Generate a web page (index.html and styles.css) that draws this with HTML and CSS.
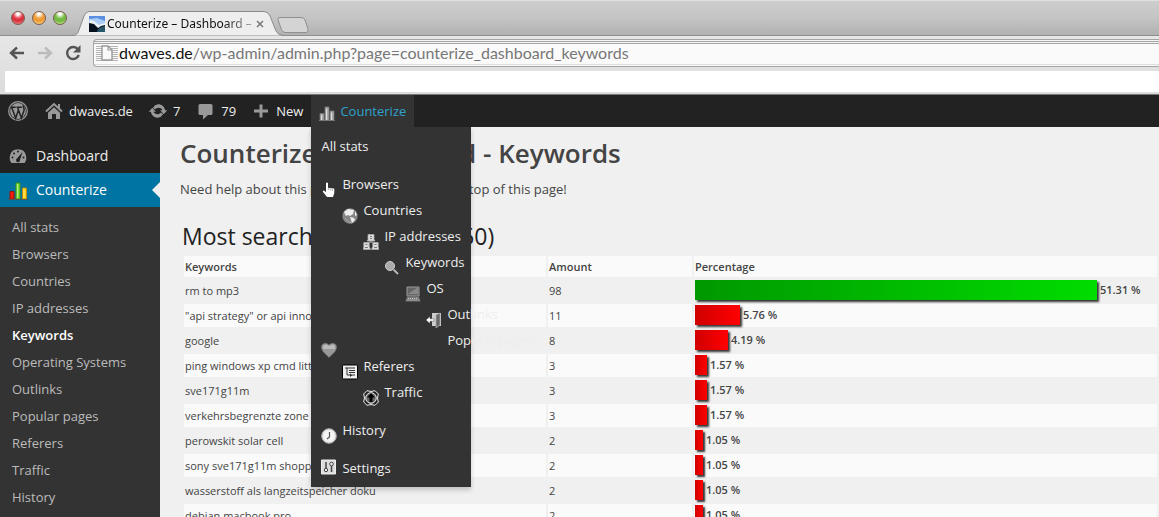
FILE: index.html
```html
<!DOCTYPE html>
<html lang="en">
<head>
<meta charset="utf-8">
<title>Counterize – Dashboard – Keywords</title>
<link rel="stylesheet" href="styles.css">
</head>
<body>
<header class="browser">
  <div class="tabstrip">
    <div class="lights">
      <button class="light light-red" aria-label="Close window"></button>
      <button class="light light-amber" aria-label="Minimise window"></button>
      <button class="light light-green" aria-label="Zoom window"></button>
    </div>
    <div class="tab">
      <svg class="tab-shape" viewBox="0 0 210 25" preserveAspectRatio="none"><path d="M0 24.500C4 24 5 22 6 19L11 5Q13 .5 16 .5H191Q195 .5 197 5L203 20Q205 24 210 24.500" fill="#eee" stroke="#8b8b8b"/></svg>
      <svg class="favicon" viewBox="0 0 16 16"><path fill="#5c8fe0" d="M0 0h16v16H0z"/><path fill="#a9cdf5" d="M0 3l8-1 8 3v5H0z"/><path fill="#eef5f7" d="M1 4l4 1 5 4 6-2v3L8 13 0 9z"/><path fill="#06121e" d="M0 7l5 1 4 4 3-2 4-1v7H0z"/><path fill="#28566b" d="M9 13l3-2 4-1v6H8z"/></svg>
      <span class="tab-title">Counterize – Dashboard –</span>
      <button class="tab-close" aria-label="Close tab"><svg viewBox="0 0 8 8"><path d="M1 1l6 6M7 1L1 7" stroke="#777" stroke-width="1.500"/></svg></button>
    </div>
    <button class="new-tab" aria-label="New tab"><svg viewBox="0 0 34 18"><path d="M4 1.500H25Q28 1.500 29 4L32 13Q33 16.500 30 16.500H9Q7 16.500 5.500 13.500L2 4Q1 1.500 4 1.500z" fill="#d4d4d4" stroke="#8f8f8f"/></svg></button>
  </div>
  <div class="toolbar">
    <button class="tool" aria-label="Back"><svg viewBox="0 0 16 16"><path d="M15 8H2M8 2.500L2 8l6 5.500" stroke="#555" stroke-width="2.400" fill="none"/></svg></button>
    <button class="tool" aria-label="Forward"><svg viewBox="0 0 16 16"><path d="M1 8h13M8 2.500L14 8l-6 5.500" stroke="#bbb" stroke-width="2.400" fill="none"/></svg></button>
    <button class="tool" aria-label="Reload"><svg viewBox="0 0 16 16"><path d="M13 4.500A6 6 0 1 0 13.800 10" stroke="#555" stroke-width="2.400" fill="none"/><path d="M15.500 0v7.500H8z" fill="#555"/></svg></button>
    <div class="omnibox">
      <span class="page-icon"><svg viewBox="0 0 12 16"><path d="M1 1h6l4 4v10H1z" fill="#fafafa" stroke="#9b9b9b" stroke-width="1.400"/><path d="M7 1v4h4" fill="none" stroke="#9b9b9b" stroke-width="1.200"/></svg></span>
      <label class="host" for="url">dwaves.de</label>
      <input class="url" id="url" type="text" value="/wp-admin/admin.php?page=counterize_dashboard_keywords">
    </div>
  </div>
  <div class="bookmarks"></div>
</header>

<nav class="adminbar" aria-label="Toolbar">
  <a class="bar-item" href="#" aria-label="WordPress"><svg class="bar-icon" viewBox="0 0 20 20"><circle cx="10" cy="10" r="9.300" fill="none" stroke="#999" stroke-width="1.300"/><circle cx="10" cy="10" r="7.900" fill="#999"/><path d="M2.500 6.300h5.200M3.700 6.500L7.700 17L10.500 9M8.500 6.300h5.400M9.600 6.500L13.400 17l2.600-7.600c.8-2.500-1.300-3-.7-5" fill="none" stroke="#222" stroke-width="1.500"/></svg></a>
  <a class="bar-item bar-snug" href="#"><svg class="bar-icon" viewBox="0 0 20 20"><path d="M2 10.500L10 3l8 7.500M15 3v5" fill="none" stroke="#999" stroke-width="2"/><path d="M10 6.200l6 5.600V18h-4v-5H8v5H4v-6.200z" fill="#999"/></svg>dwaves.de</a>
  <a class="bar-item" href="#"><svg class="bar-icon" viewBox="0 0 20 20"><path d="M10.200 3.280c3.530 0 6.430 2.610 6.920 6h2.080l-3.500 4-3.500-4h2.320a4.440 4.440 0 0 0-3.970-2.450c-1.450 0-2.730.71-3.540 1.780L4.950 6.660a6.960 6.960 0 0 1 5.250-3.380zM9.800 16.720c-3.520 0-6.430-2.610-6.920-6H.8l3.500-4 3.500 4H5.480c.7 1.450 2.200 2.450 3.970 2.450 1.450 0 2.730-.71 3.540-1.780l2.060 1.950a6.950 6.950 0 0 1-5.250 3.380z" fill="#999"/></svg>7</a>
  <a class="bar-item bar-snug" href="#"><svg class="bar-icon" viewBox="0 0 20 20"><path d="M4 3h11q1.500 0 1.500 1.500v8Q16.500 14 15 14h-3l-5 4.500V14H4q-1.500 0-1.500-1.500v-8Q2.500 3 4 3z" fill="#999"/></svg>79</a>
  <a class="bar-item" href="#"><svg class="bar-icon" viewBox="0 0 20 20"><path d="M3 10h14M10 3.500v13" stroke="#999" stroke-width="3"/></svg>New</a>
  <div class="bar-menu">
    <a class="bar-item bar-open" href="#"><svg class="icon" viewBox="0 0 16 16"><path d="M1 8.500h4V16H1zM6 2h4v14H6zM11 6h4v10h-4z" fill="#aaa" stroke="#777" stroke-width=".8"/><path d="M2.500 10v5M7.500 4v11M12.500 8v7" stroke="#ddd"/><path d="M0 15.500h16" stroke="#777"/></svg>Counterize</a>
    <div class="dropdown">
      <div class="group"><a class="entry" href="#">All stats</a></div>
      <div class="group">
        <a class="entry" href="#"><svg class="icon" viewBox="0 0 16 16"><path d="M5 1.500Q5 .5 6 .5T7 1.500V6q1-.8 2 .2q1-.7 2 .3q1.500-.6 2.300.5V11l-1.300 4H6L2 10q-.8-1.500.8-1.500L5 10z" fill="#fff"/><path d="M7.300 6v2M9.300 6.500v2M11.300 7v2" stroke="#777" stroke-width=".6"/></svg>Browsers</a>
        <a class="entry step-1" href="#"><svg class="icon" viewBox="0 0 16 16"><circle cx="8" cy="8" r="7.700" fill="#858585"/><path d="M2 4l4-3 6 1-1 4-3 2-2-1-2 1zM8 9l4 1 1 2-3 3-1-3zM13 3l2 4-2 1z" fill="#eee"/><path d="M3 10q3 5 7 5" stroke="#aaa" fill="none"/></svg>Countries</a>
        <a class="entry step-2" href="#"><svg class="icon" viewBox="0 0 16 16"><path d="M8 6v3M3 11l3-3h4l3 3" stroke="#999" fill="none"/><g fill="#ddd" stroke="#aaa" stroke-width=".8"><path d="M5 .5h6v5l1 1.500H4l1-1.500zM.8 8.500h5.400v4l1.300 3H.3l.5-3zM9.800 8.500h5.400v4l.5 3H8.500l1.300-3z"/></g><path d="M7 2.500h2M7 4.500h2M2.500 10.500h2M11.500 10.500h2M2 13.500h3M11 13.500h3" stroke="#777"/></svg>IP addresses</a>
        <a class="entry step-3" href="#"><svg class="icon" viewBox="0 0 16 16"><circle cx="6" cy="6" r="4.500" fill="#aaa" stroke="#d0d0d0"/><path d="M9.500 9.500l4.500 4.500" stroke="#bbb" stroke-width="1.800"/></svg>Keywords</a>
        <a class="entry step-4" href="#"><svg class="icon" viewBox="0 0 16 16"><path d="M2 1h12v9H2z" fill="#666" stroke="#999"/><path d="M3 8l9-6h1v6z" fill="#888"/><path d="M2 10.500h12l1.700 5H.3z" fill="#777"/><path d="M3 12.500h10M2.500 14h11" stroke="#ccc" stroke-dasharray="1 1"/></svg>OS</a>
        <a class="entry step-5" href="#"><svg class="icon" viewBox="0 0 16 16"><path d="M6 1h9v13H6z" fill="#ccc"/><path d="M10 3l4-2v12l-4 3z" fill="#666" stroke="#aaa" stroke-width=".8"/><path d="M0 8l4-3.500v2.300h4v2.400H4v2.300z" fill="#fff" stroke="#555" stroke-width=".5"/></svg>Outlinks</a>
        <a class="entry entry-split" href="#"><svg class="icon" viewBox="0 0 16 16"><path d="M8 15.500L2 9.500Q-.5 6 1 3Q4-.5 8 3Q12-.5 15 3q1.500 3-1 6.500z" fill="#999" stroke="#777" stroke-width=".7"/><path d="M2 4q3-3 5.500 0H8.500Q12 1 14 4v3H2z" fill="#bbb"/></svg><span>Popular pages</span></a>
        <a class="entry step-1" href="#"><svg class="icon" viewBox="0 0 16 16"><rect x=".5" y="1" width="15" height="14" rx="1" fill="#eee" stroke="#000"/><path d="M3 4h10M5 4v7h3M7 6.500h6M7 8.500h6M9 11h4" stroke="#333" fill="none"/><path d="M8 9.500l2 1.700L8 13z" fill="#222"/></svg>Referers</a>
        <a class="entry step-2" href="#"><svg class="icon" viewBox="0 0 16 16"><path d="M4 .7L8 1.500l4-.8L15.300 4l-.8 4 .8 4-3.300 3.300-4-.8-4 .8L.7 12l.8-4-.8-4z" fill="#222" stroke="#eee"/><circle cx="8" cy="8" r="5.300" fill="#666" stroke="#eee"/><path d="M8 3L12 7.500H9.500V12h-3V7.500H4z" fill="#000"/></svg>Traffic</a>
      </div>
      <div class="group"><a class="entry" href="#"><svg class="icon" viewBox="0 0 16 16"><circle cx="8" cy="8" r="7.300" fill="#e8e8e8" stroke="#aaa"/><circle cx="8" cy="8" r="5.500" fill="#f5f5f5"/><path d="M8.500 4v5L6 11" stroke="#555" stroke-width="1.200" fill="none"/></svg>History</a></div>
      <div class="group"><a class="entry entry-level" href="#"><svg class="icon" viewBox="0 0 16 16"><path d="M.5 1h14v14H.5z" fill="#ddd" stroke="#eee"/><path d="M5 3v7M10.500 7v6" stroke="#444" stroke-width="1.500"/><circle cx="5" cy="11" r="1.700" fill="#eee" stroke="#444"/><circle cx="10.500" cy="5" r="1.800" fill="#eee" stroke="#444"/></svg>Settings</a></div>
    </div>
  </div>
</nav>

<div class="workspace">
  <nav class="sidebar" aria-label="Main menu">
    <a class="side-item" href="#"><svg class="side-icon" viewBox="0 0 20 20"><path d="M3.500 17Q1 14 2 9.500A8.200 8 0 0 1 18 9.500q1 4.500-1.500 7.500z" fill="#999"/><g fill="#222"><circle cx="4.500" cy="11.500" r="1"/><circle cx="6" cy="7.500" r="1"/><circle cx="10" cy="5.500" r="1"/><circle cx="15.500" cy="11.500" r="1"/><path d="M14.500 6L12 14a2 2 0 1 1-3-1.500z"/></g></svg>Dashboard</a>
    <a class="side-item side-current" href="#"><svg class="side-icon" viewBox="0 0 20 20"><path d="M2 11.500h4V19H2z" fill="#f21d0c" stroke="#9c1307"/><path d="M8 3h4v16H8z" fill="#7be13c" stroke="#3f8f1b"/><path d="M14.500 8h4v11h-4z" fill="#ffd21c" stroke="#b98c08"/><path d="M9.500 4v14M16 9v9" stroke="#fff" opacity=".4"/><path d="M0 19.500h20" stroke="#555"/></svg>Counterize</a>
    <div class="submenu">
      <a href="#">All stats</a>
      <a href="#">Browsers</a>
      <a href="#">Countries</a>
      <a href="#">IP addresses</a>
      <a href="#" class="active">Keywords</a>
      <a href="#">Operating Systems</a>
      <a href="#">Outlinks</a>
      <a href="#">Popular pages</a>
      <a href="#">Referers</a>
      <a href="#">Traffic</a>
      <a href="#">History</a>
    </div>
  </nav>
  <main class="content">
    <h1>Counterize - Dashboard - Keywords</h1>
    <p>Need help about this page? Click on Help at the top of this page!</p>
    <section class="report">
      <h2>Most searched keywords (50)</h2>
      <table class="stats">
        <thead><tr><th class="col-key">Keywords</th><th class="col-amount">Amount</th><th>Percentage</th></tr></thead>
        <tbody>
          <tr><td>rm to mp3</td><td>98</td><td><div class="meter"><span class="bar bar-top" style="width:402px"></span>51.31 %</div></td></tr>
          <tr><td>"api strategy" or api innovation</td><td>11</td><td><div class="meter"><span class="bar" style="width:45px"></span>5.76 %</div></td></tr>
          <tr><td>google</td><td>8</td><td><div class="meter"><span class="bar" style="width:33px"></span>4.19 %</div></td></tr>
          <tr><td>ping windows xp cmd little</td><td>3</td><td><div class="meter"><span class="bar" style="width:12px"></span>1.57 %</div></td></tr>
          <tr><td>sve171g11m</td><td>3</td><td><div class="meter"><span class="bar" style="width:12px"></span>1.57 %</div></td></tr>
          <tr><td>verkehrsbegrenzte zone</td><td>3</td><td><div class="meter"><span class="bar" style="width:12px"></span>1.57 %</div></td></tr>
          <tr><td>perowskit solar cell</td><td>2</td><td><div class="meter"><span class="bar" style="width:8px"></span>1.05 %</div></td></tr>
          <tr><td>sony sve171g11m shopping</td><td>2</td><td><div class="meter"><span class="bar" style="width:8px"></span>1.05 %</div></td></tr>
          <tr><td>wasserstoff als langzeitspeicher doku</td><td>2</td><td><div class="meter"><span class="bar" style="width:8px"></span>1.05 %</div></td></tr>
          <tr><td>debian macbook pro</td><td>2</td><td><div class="meter"><span class="bar" style="width:8px"></span>1.05 %</div></td></tr>
        </tbody>
      </table>
    </section>
  </main>
</div>
</body>
</html>
```

FILE: styles.css
```css
* { box-sizing: border-box; }
body {
  margin: 0;
  height: 100vh;
  overflow: hidden;
  display: flex;
  flex-direction: column;
  background: #f0f0f0;
  color: #444;
  font: 13px/20px "Open Sans", sans-serif;
}
a { color: inherit; text-decoration: none; }
button { border: 0; padding: 0; background: none; }
svg { display: block; flex: none; }

/* Browser window */
.browser {
  flex: none;
  background: linear-gradient(#ededed, #dcdcdc);
  border-bottom: 1px solid #777;
  font-family: "Noto Sans", sans-serif;
}
.tabstrip {
  display: flex;
  align-items: flex-end;
  height: 36px;
  border-top: 1px solid #e0e0e0;
  background: linear-gradient(#cdcdcd, #c4c4c4 50%, #b0b0b0);
  box-shadow: inset 0 -1px #8f8f8f;
}
.lights { display: flex; gap: 7px; padding: 0 6px 11px 11px; }
.light {
  width: 14px;
  height: 14px;
  border: 1px solid #7a5a50;
  border-radius: 50%;
}
.light-red { background: radial-gradient(circle at 50% 15%, #fff 10%, #e8404e 40%, #d3303a 60%, #ff9a94); }
.light-amber { background: radial-gradient(circle at 50% 15%, #fff 10%, #f0a03c 40%, #ee9a35 60%, #ffe68a); }
.light-green { background: radial-gradient(circle at 50% 15%, #fff 10%, #7cc04a 40%, #70b640 60%, #d2f59c); }
.tab {
  position: relative;
  display: flex;
  align-items: center;
  width: 210px;
  height: 25px;
  padding: 0 19px 0 16px;
  color: #111;
  font-size: 12px;
}
.tab-shape { position: absolute; inset: 0; width: 100%; height: 100%; }
.favicon { position: relative; width: 16px; height: 16px; margin-right: 2px; }
.tab-title {
  position: relative;
  flex: 1;
  overflow: hidden;
  white-space: nowrap;
  -webkit-mask-image: linear-gradient(90deg, #000 80%, rgba(0, 0, 0, .3));
  mask-image: linear-gradient(90deg, #000 80%, rgba(0, 0, 0, .3));
}
.tab-close { position: relative; width: 8px; margin-left: 4px; }
.new-tab { width: 34px; height: 18px; margin: 0 0 2px -7px; }
.toolbar { display: flex; align-items: center; height: 35px; padding: 0 0 2px 9px; }
.tool { width: 16px; height: 16px; margin-right: 12px; }
.omnibox {
  flex: 1;
  display: flex;
  align-items: center;
  height: 28px;
  border: 1px solid #a5a5a5;
  border-right: 0;
  border-radius: 4px 0 0 4px;
  background: linear-gradient(#f5f5f5 1px, #a5a5a5 1px 2px, #f5f5f5 2px 3px, #a5a5a5 3px 4px, #fafafa 4px 24px, #ddd 24px 25px, #fafafa 25px);
  font-family: Lato, sans-serif;
  font-size: 16px;
}
.page-icon {
  display: flex;
  justify-content: center;
  width: 22px;
  margin: 0 1px 0 2px;
  background: repeating-linear-gradient(#fafafa 0 1px, #b5b5b5 1px 2px);
}
.page-icon svg { width: 12px; height: 16px; }
.host { color: #111; }
.url {
  flex: 1;
  min-width: 0;
  border: 0;
  padding: 0;
  outline: 0;
  background: none;
  color: #777;
  font: inherit;
}
.bookmarks { height: 23px; margin-left: 5px; background: #fff; border-bottom: 2px solid #ddd; }

/* Admin toolbar */
.adminbar {
  flex: none;
  position: relative;
  z-index: 2;
  display: flex;
  height: 32px;
  background: #222;
  color: #eee;
}
.bar-item { display: flex; align-items: center; gap: 5px; height: 32px; padding: 0 8px; }
.bar-snug { padding-right: 7px; }
.bar-icon { width: 20px; height: 20px; }
.icon { width: 16px; height: 16px; }
.bar-menu { position: relative; }
.bar-open { background: #333; color: #2ea2cc; }
.bar-open .icon { margin-top: 4px; }
.dropdown {
  position: absolute;
  top: 100%;
  left: 0;
  display: flex;
  flex-direction: column;
  gap: 12px;
  width: 160px;
  padding: 6px 0 6px 10px;
  background: #333;
  box-shadow: 0 3px 5px rgba(0, 0, 0, .2);
}
.entry {
  display: flex;
  gap: 5px;
  height: 26px;
  line-height: 26px;
  white-space: nowrap;
}
.entry .icon { margin-top: 11px; }
.entry-level .icon { margin-top: 4px; }
.entry-split { gap: 110px; }
.entry-split .icon { margin-top: 15px; }
.step-1 { margin-left: 21px; }
.step-2 { margin-left: 42px; }
.step-3 { margin-left: 63px; }
.step-4 { margin-left: 84px; }
.step-5 { margin-left: 105px; }

/* Main menu and page */
.workspace { flex: 1; display: flex; min-height: 0; }
.sidebar {
  flex: none;
  display: flex;
  flex-direction: column;
  width: 160px;
  padding-top: 12px;
  background: #222;
}
.side-item {
  flex: none;
  display: flex;
  align-items: center;
  gap: 8px;
  height: 34px;
  padding: 0 8px;
  color: #eee;
  font-size: 14px;
}
.side-icon { width: 20px; height: 20px; }
.side-current { position: relative; background: #0074a2; color: #fff; }
.side-current::after {
  content: "";
  position: absolute;
  right: 0;
  border: 8px solid transparent;
  border-left: 0;
  border-right-color: #f0f0f0;
}
.submenu { flex: 1; padding: 7px 12px; background: #333; color: #bbb; }
.submenu a { display: block; line-height: 27px; }
.submenu .active { color: #fff; font-weight: 600; }
.content { flex: 1; min-width: 0; padding: 10px 0 0 20px; }
h1 { margin: 0; font-size: 26px; font-weight: 600; line-height: 32px; }
.content p { margin: 10px 0 0; }
.report { padding: 22px 0 0 2px; }
h2 { margin: 0; color: #222; font-size: 23px; font-weight: 400; line-height: 30px; }
.stats {
  width: 100%;
  margin-top: 3px;
  border-spacing: 2px;
  table-layout: fixed;
  font-size: 11px;
}
.stats th, .stats td { padding: 1px; text-align: left; }
.stats th { height: 21px; background: #fafafa; font-weight: 600; line-height: 19px; }
.stats td { height: 23px; line-height: 21px; white-space: nowrap; }
.stats tbody tr:nth-child(even) td { background: #fafafa; }
.col-key { width: 362px; }
.col-amount { width: 144px; }
.meter { display: flex; gap: 3px; height: 21px; line-height: 20px; font-weight: 600; }
.bar {
  flex: none;
  height: 20px;
  background: linear-gradient(90deg, #d00000, #f00);
  box-shadow: 2px 2px 2px #333;
}
.bar-top { background: linear-gradient(90deg, #009800, #00dc00); }
```
